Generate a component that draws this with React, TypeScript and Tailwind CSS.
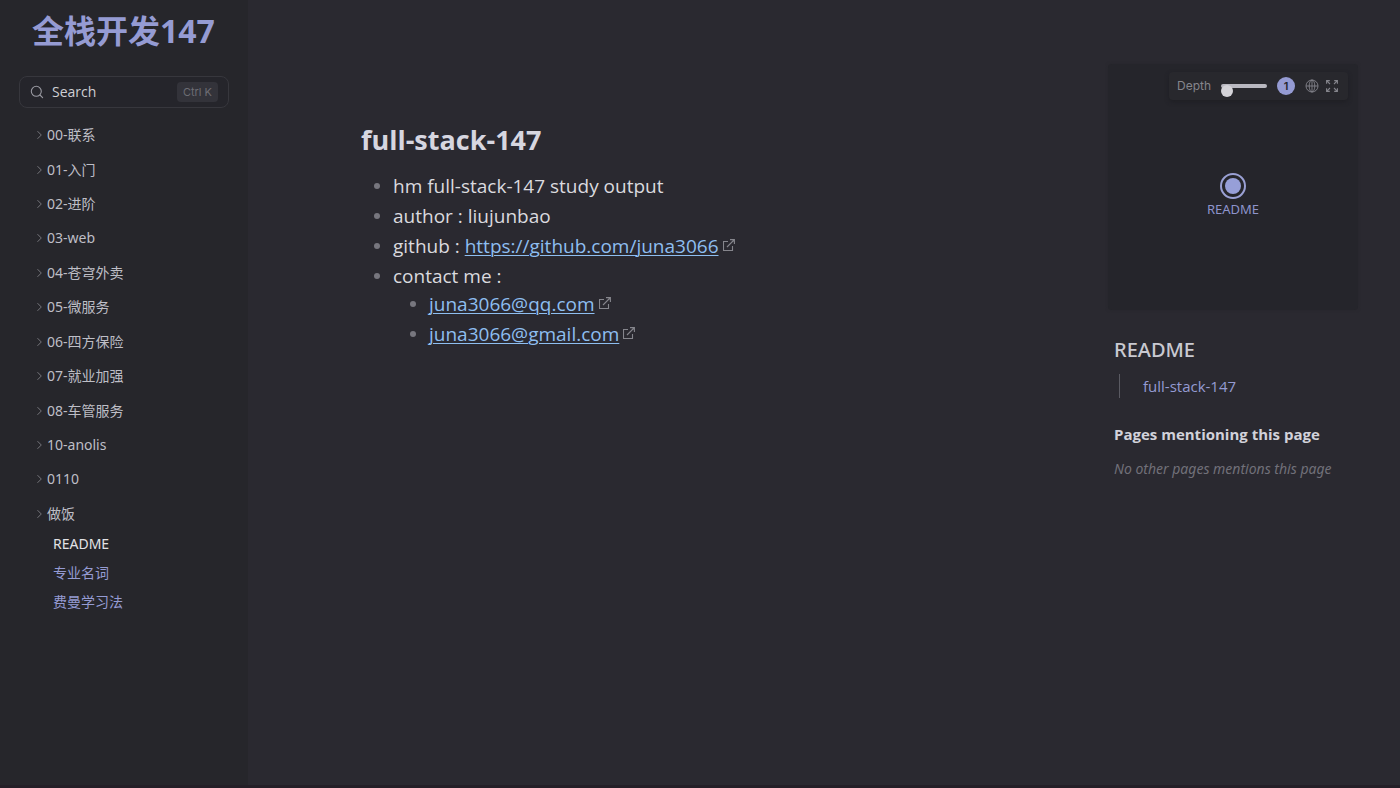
import { useState } from "react";

const folders = [
  "00-联系", "01-入门", "02-进阶", "03-web", "04-苍穹外卖", "05-微服务",
  "06-四方保险", "07-就业加强", "08-车管服务", "10-anolis", "0110", "做饭",
];

function SearchIcon() {
  return (
    <svg className="size-3.5 shrink-0 text-[#9a9aa2]" viewBox="0 0 14 14" fill="none" stroke="currentColor" strokeWidth="1.1" strokeLinecap="round" aria-hidden="true">
      <circle cx="6.3" cy="6.3" r="5" />
      <path d="M10 10l2.6 2.6" />
    </svg>
  );
}

function Chevron() {
  return (
    <svg className="h-2.5 w-1.5 shrink-0 text-[#77777d]" viewBox="0 0 6 10" fill="none" stroke="currentColor" strokeWidth="1" aria-hidden="true">
      <path d="M1.5 1.2l3.8 3.8-3.8 3.8" />
    </svg>
  );
}

function ExternalIcon() {
  return (
    <svg className="mb-0.5 ml-1 inline-block size-3 align-baseline text-[#85858c]" viewBox="0 0 12 12" fill="none" stroke="currentColor" strokeWidth="1.1" aria-hidden="true">
      <path d="M5 2.5H.5v9h9V7M4 8l7-7M7 .6h4.4V5" />
    </svg>
  );
}

function GlobeIcon() {
  return (
    <svg className="size-3.5" viewBox="0 0 14 14" fill="none" stroke="currentColor" strokeWidth="0.9" aria-hidden="true">
      <circle cx="7" cy="7" r="6" />
      <ellipse cx="7" cy="7" rx="2.8" ry="6" />
      <path d="M1 7h12M7 1v12" />
    </svg>
  );
}

function ExpandIcon() {
  return (
    <svg className="size-3" viewBox="0 0 12 12" fill="none" stroke="currentColor" strokeWidth="1.1" aria-hidden="true">
      <path d="M.6 3.8V.6h3.2M8.2.6h3.2v3.2M11.4 8.2v3.2H8.2M3.8 11.4H.6V8.2M.6.6l3.4 3.4M11.4.6L8 4M11.4 11.4L8 8M.6 11.4L4 8" />
    </svg>
  );
}

function ExternalLink({ href, children }: { href: string; children: string }) {
  return (
    <>
      <a href={href} className="text-[#8ebef0] underline decoration-1 underline-offset-2">{children}</a>
      <ExternalIcon />
    </>
  );
}

function Sidebar() {
  return (
    <aside className="w-62 shrink-0 bg-[#26262b]">
      <h2 className="pt-[7px] pl-8 text-[32px] leading-12 font-bold text-[#959bd3]">
        <a href="#">全栈开发147</a>
      </h2>
      <label className="mx-[19px] mt-[21px] flex h-8 items-center gap-2 rounded-lg border border-[#37373d] bg-[#25252b] px-2.5">
        <SearchIcon />
        <input
          type="search"
          aria-label="Search"
          placeholder="Search"
          className="min-w-0 flex-1 bg-transparent font-['Open_Sans',sans-serif] text-sm text-[#cfcfd4] outline-none placeholder:text-[#cfcfd4]"
        />
        <kbd className="rounded bg-[#33333a] px-1.5 font-[Inter,sans-serif] text-[11px] leading-5 text-[#6d6d74]">Ctrl K</kbd>
      </label>
      <nav aria-label="Pages" className="mt-2.5 pl-9 text-sm">
        <ul className="grid min-h-[413px] auto-rows-fr">
          {folders.map((name) => (
            <li key={name} className="flex items-center">
              <button type="button" className="flex items-center gap-[5px] text-[#bebec6]">
                <Chevron />
                {name}
              </button>
            </li>
          ))}
        </ul>
        <ul className="-mt-0.5 pl-[17px] leading-[29px] text-[#959bd3]">
          <li><a href="#" aria-current="page" className="text-[#e2e2e6]">README</a></li>
          <li><a href="#">专业名词</a></li>
          <li><a href="#">费曼学习法</a></li>
        </ul>
      </nav>
    </aside>
  );
}

function Graph() {
  const [depth, setDepth] = useState(1);
  return (
    <section aria-label="Graph" className="flex h-[246px] flex-col rounded bg-[#25252b] p-2 shadow-[0_0_3px_#26262c]">
      <div className="mr-0.5 flex h-7 items-center self-end rounded bg-[#28282d] pr-2.5 pl-2 font-[Inter,sans-serif] text-[#85858c] shadow-[0_2px_4px_#1f1f24]">
        <label htmlFor="depth" className="text-xs">Depth</label>
        <input
          id="depth"
          type="range"
          min={1}
          max={5}
          value={depth}
          onChange={(e) => setDepth(Number(e.target.value))}
          className="ml-2.5 h-1 w-[46px] appearance-none rounded bg-[#b9b8c0] [&::-webkit-slider-thumb]:mt-2.5 [&::-webkit-slider-thumb]:size-3 [&::-webkit-slider-thumb]:appearance-none [&::-webkit-slider-thumb]:rounded-full [&::-webkit-slider-thumb]:bg-[#d4d3d8]"
        />
        <output htmlFor="depth" className="ml-2.5 flex size-[18px] items-center justify-center rounded-full bg-[#959bd3] text-[11px] font-semibold text-[#25252b]">{depth}</output>
        <button type="button" aria-label="Global graph" className="ml-2.5"><GlobeIcon /></button>
        <button type="button" aria-label="Expand graph" className="ml-[7px]"><ExpandIcon /></button>
      </div>
      <a href="#" className="mt-[73px] flex flex-col items-center text-[13px] leading-5 text-[#8e94cc]">
        <svg className="size-[26px]" viewBox="0 0 26 26" aria-hidden="true">
          <circle cx="13" cy="13" r="12" fill="none" stroke="#9aa0d4" strokeWidth="2" />
          <circle cx="13" cy="13" r="8" fill="#979fd8" />
        </svg>
        README
      </a>
    </section>
  );
}

export default function App() {
  return (
    <div className="flex min-h-screen border-b-3 border-[#241f27] bg-[#2a2930] font-['Noto_Sans','Noto_Sans_CJK_SC',sans-serif]">
      <Sidebar />
      <main className="min-w-0 flex-1 px-[113px] pt-[120px] font-['Open_Sans',sans-serif] text-[19px] leading-[30px] text-[#dadadf]">
        <h1 className="text-[27px] leading-10 font-bold text-[#d6d6e0]">full-stack-147</h1>
        <ul className="mt-[11px] list-none">
          {[
            <>hm full-stack-147 study output</>,
            <>author : liujunbao</>,
            <>github : <ExternalLink href="https://github.com/juna3066">https://github.com/juna3066</ExternalLink></>,
            <>contact me :</>,
          ].map((item, i) => (
            <li key={i} className="flex items-center gap-3 pl-3">
              <span className="size-2 scale-75 rounded-full bg-[#77767e]" />
              <span>{item}</span>
            </li>
          ))}
          <li>
            <ul className="-mt-0.5 pl-9">
              {["juna3066@qq.com", "juna3066@gmail.com"].map((mail) => (
                <li key={mail} className="flex items-center gap-3 pl-3">
                  <span className="size-2 scale-75 rounded-full bg-[#77767e]" />
                  <span><ExternalLink href={"mailto:" + mail}>{mail}</ExternalLink></span>
                </li>
              ))}
            </ul>
          </li>
        </ul>
      </main>
      <aside className="mr-[42px] w-[250px] shrink-0 pt-16">
        <Graph />
        <div className="px-1.5 pt-[26px]">
          <h2 className="text-xl leading-7 font-medium text-[#c9c9d1]">README</h2>
          <div className="mt-2.5 ml-[5px] border-l border-[#5a5a62] pl-[23px] font-['Open_Sans',sans-serif] text-[15px] leading-6 text-[#959bd3]">
            <a href="#">full-stack-147</a>
          </div>
          <h3 className="mt-6 font-['Open_Sans',sans-serif] text-[15px] leading-6 font-bold text-[#d2d2da]">Pages mentioning this page</h3>
          <p className="mt-[11px] text-sm leading-6 text-[#717079] italic">No other pages mentions this page</p>
        </div>
      </aside>
    </div>
  );
}
